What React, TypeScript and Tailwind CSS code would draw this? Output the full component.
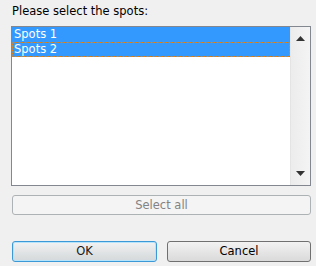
import React from 'react';

export default function App() {
  const spots = ['Spots 1', 'Spots 2'];

  return (
    <div className="w-[316px] h-[266px] bg-[#f0f0f0] pl-[11px] pt-[4px] text-[11.5px] leading-[15px] font-['DejaVu_Sans',Tahoma,sans-serif] text-black">
      <p className="pl-[1px]">Please select the spots:</p>

      {/* list box */}
      <div className="mt-[7px] w-[300px] h-[160px] border border-[#828790] bg-white flex">
        <ul className="flex-1">
          {spots.map((s, i) => (
            <li key={s} className="relative h-[15px] bg-[#3399ff] text-white pl-[2px]">
              {s}
              {i === 1 && (
                // focus rectangle
                <svg className="absolute left-0 top-0" width="278" height="15" viewBox="0 0 278 15">
                  <rect x="0.5" y="0.5" width="277" height="14" fill="none" stroke="#f08000" strokeWidth="1" strokeDasharray="2 1" />
                </svg>
              )}
            </li>
          ))}
        </ul>
        <div className="w-[20px] bg-gradient-to-r from-[#ececec] to-[#f4f4f4] border-l border-[#e4e4e4] flex flex-col justify-between items-center py-[9px]">
          <svg width="9" height="5" viewBox="0 0 9 5">
            <path d="M4.5 0 L9 5 L0 5 Z" fill="#333" />
          </svg>
          <svg width="9" height="5" viewBox="0 0 9 5">
            <path d="M0 0 L9 0 L4.5 5 Z" fill="#333" />
          </svg>
        </div>
      </div>

      <button className="mt-[9px] ml-[1px] w-[299px] h-[20px] rounded-[3px] border border-[#adb2b5] bg-[#f4f4f4] text-[#838383] flex items-center justify-center">
        Select all
      </button>

      <div className="mt-[26px] ml-[1px] flex gap-[10px]">
        <button className="w-[145px] h-[21px] rounded-[3px] border border-[#3c99d8] bg-gradient-to-b from-[#f2f2f2] to-[#d3d8da] shadow-[inset_0_0_0_1px_#b6e4fa] text-[#1a1a1a] flex items-center justify-center">
          OK
        </button>
        <button className="w-[144px] h-[21px] rounded-[3px] border border-[#707070] bg-gradient-to-b from-[#f2f2f2] to-[#dadada] text-black flex items-center justify-center">
          Cancel
        </button>
      </div>
    </div>
  );
}
